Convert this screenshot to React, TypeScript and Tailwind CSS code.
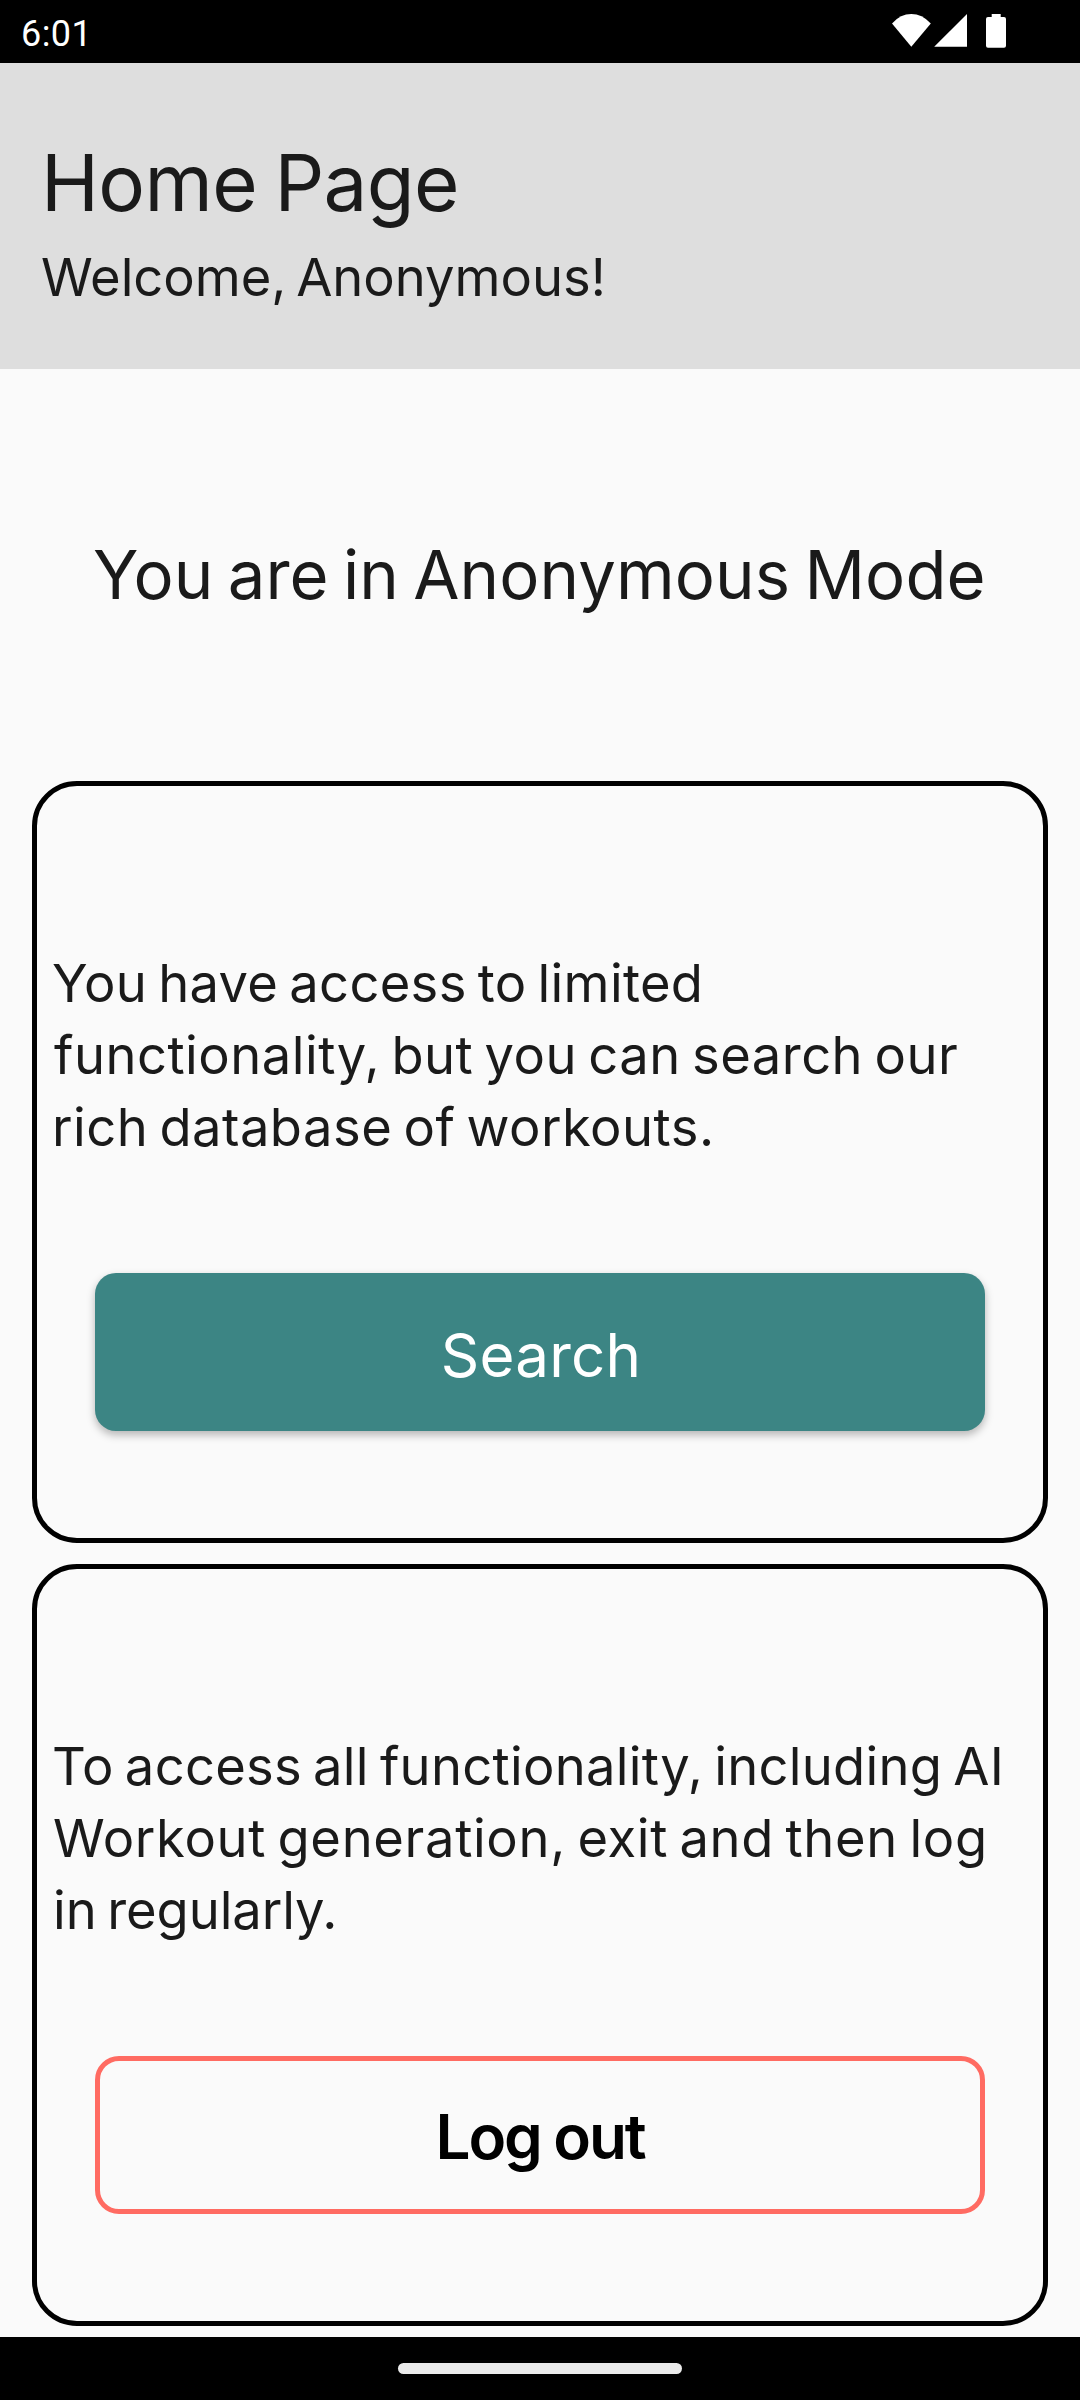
import React from 'react';
import type { ReactNode } from 'react';

function StatusBar() {
  return (
    <div className="flex h-[63px] shrink-0 items-start justify-between bg-black pl-[21px] text-white">
      <span className="mt-[14px] font-['Roboto',sans-serif] text-[36px] leading-[40px] tracking-[0.4px]">6:01</span>
      <svg className="mr-[70px] h-[63px] w-[120px]" viewBox="0 0 120 63" fill="currentColor" aria-hidden="true">
        <path d="M2 23.4 Q10.5 14 21.3 14 Q32 14 40.8 23.4 L21.3 46.8 Z" />
        <path d="M44.2 46.8 L77 14 V46.8 Z" />
        <path d="M101.7 14 H110.7 V17 H114 Q116 17 116 19 V45.7 Q116 47.7 114 47.7 H98 Q96 47.7 96 45.7 V19 Q96 17 98 17 H101.7 Z" />
      </svg>
    </div>
  );
}

function Card({ children }: { children: ReactNode }) {
  return (
    <section className="flex h-[762px] shrink-0 flex-col rounded-[45px] border-[5px] border-black px-[16px] pt-[161px]">
      {children}
    </section>
  );
}

const bodyText = 'whitespace-nowrap text-[52.5px] leading-[72px] [word-spacing:-4px]';

export default function App() {
  return (
    <div className="flex h-[2400px] w-[1080px] flex-col overflow-hidden bg-[#fafafa] font-['Inter',sans-serif] text-[#1a1a1a]">
      <StatusBar />

      <header className="flex h-[306px] shrink-0 flex-col bg-[#dedede] pt-[72px]">
        <h1 className="pl-[41px] text-[78px] leading-[96px] tracking-[-0.63px] [word-spacing:-3.9px]">Home Page</h1>
        <p className="mt-[10px] pl-[41px] text-[52.5px] leading-[72px] tracking-[-0.02px] [word-spacing:-5px]">
          Welcome, Anonymous!
        </p>
      </header>

      <main className="flex grow flex-col px-[32px] pt-[166px]">
        <h2 className="whitespace-nowrap pl-[61px] text-[67px] leading-[80px] tracking-[0.1px] [word-spacing:-4.7px]">
          You are in Anonymous Mode
        </h2>

        <div className="mt-[166px] flex flex-col gap-[21px]">
          <Card>
            <p className={bodyText}>
              <span className="-ml-px block tracking-[0.31px]">You have access to limited</span>
              <span className="ml-px block tracking-[0.49px]">functionality, but you can search our</span>
              <span className="-ml-px block tracking-[0.47px]">rich database of workouts.</span>
            </p>
            <button className="mx-[42px] mt-[110px] h-[158px] rounded-[21px] bg-[#3c8584] pt-[5px] pl-[2px] text-[60px] leading-[72px] tracking-[0.2px] text-white shadow-[0_4px_9px_rgba(0,0,0,0.28)]">
              Search
            </button>
          </Card>

          <Card>
            <p className={bodyText}>
              <span className="-ml-px block tracking-[0.28px]">To access all functionality, including AI</span>
              <span className="block tracking-[0.66px]">Workout generation, exit and then log</span>
              <span className="block tracking-[-0.08px]">in regularly.</span>
            </p>
            <button className="mx-[42px] mt-[110px] h-[158px] rounded-[24px] border-[5px] border-[#ff6b62] pt-[4px] text-[62px] leading-[72px] font-semibold tracking-[-2.1px] text-black [word-spacing:-1px]">
              Log out
            </button>
          </Card>
        </div>
      </main>

      <nav className="flex h-[63px] shrink-0 justify-center bg-black pt-[26px]">
        <div className="h-[11px] w-[284px] rounded-full bg-[#ebebeb]" />
      </nav>
    </div>
  );
}
